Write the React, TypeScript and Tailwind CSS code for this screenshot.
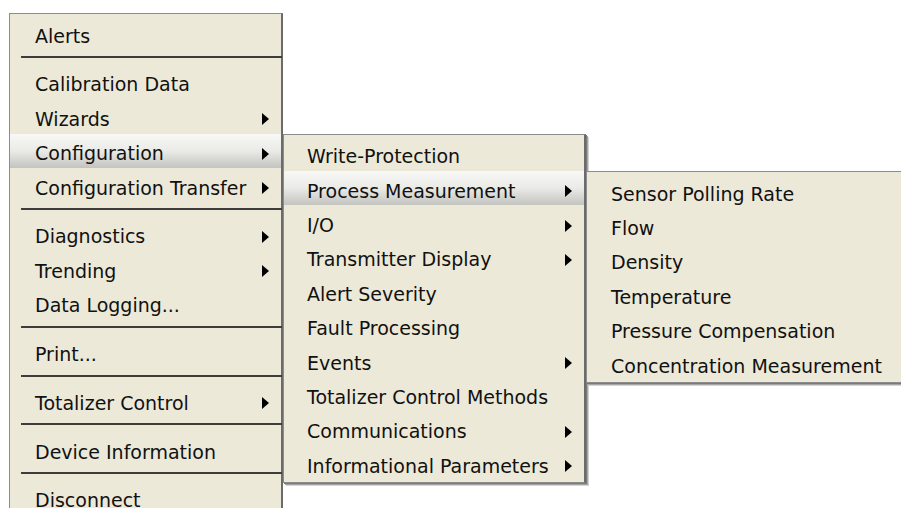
type Entry = { label: string; sub?: boolean; open?: boolean } | 'sep'

const MAIN: Entry[] = [
  { label: 'Alerts' },
  'sep',
  { label: 'Calibration Data' },
  { label: 'Wizards', sub: true },
  { label: 'Configuration', sub: true, open: true },
  { label: 'Configuration Transfer', sub: true },
  'sep',
  { label: 'Diagnostics', sub: true },
  { label: 'Trending', sub: true },
  { label: 'Data Logging...' },
  'sep',
  { label: 'Print...' },
  'sep',
  { label: 'Totalizer Control', sub: true },
  'sep',
  { label: 'Device Information' },
  'sep',
  { label: 'Disconnect' },
]

const CONFIG: Entry[] = [
  { label: 'Write-Protection' },
  { label: 'Process Measurement', sub: true, open: true },
  { label: 'I/O', sub: true },
  { label: 'Transmitter Display', sub: true },
  { label: 'Alert Severity' },
  { label: 'Fault Processing' },
  { label: 'Events', sub: true },
  { label: 'Totalizer Control Methods' },
  { label: 'Communications', sub: true },
  { label: 'Informational Parameters', sub: true },
]

const PROCESS: Entry[] = [
  { label: 'Sensor Polling Rate' },
  { label: 'Flow' },
  { label: 'Density' },
  { label: 'Temperature' },
  { label: 'Pressure Compensation' },
  { label: 'Concentration Measurement' },
]

function Arrow() {
  return (
    <svg width="7" height="12" viewBox="0 0 7 12" className="ml-auto shrink-0">
      <path d="M0 0L7 6L0 12Z" fill="#000" />
    </svg>
  )
}

function Menu({ items, pad, child }: { items: Entry[]; pad: string; child?: React.ReactNode }) {
  return (
    <div className="flex flex-col py-[2px]">
      {items.map((it, i) =>
        it === 'sep' ? (
          <div key={i} className="h-[14.4px] pt-[6px] pl-[11px] -mr-px">
            <div className="h-[2px] bg-[#3d3d3d]" />
          </div>
        ) : (
          <div
            key={i}
            className={`relative flex h-[34.4px] items-center pt-[6px] pr-[12px] ${pad} text-[19px] leading-none whitespace-nowrap text-[#111] ${
              it.open ? 'bg-linear-to-b from-[#f8f8f6] via-[#eaeae7] to-[#c3c3bf]' : ''
            }`}
          >
            <span>{it.label}</span>
            {it.sub && <Arrow />}
            {it.open && child}
          </div>
        )
      )}
    </div>
  )
}

export default function App() {
  const panel =
    'border border-[#8c8c8c] border-r-2 border-r-[#6b6b6b] bg-[#ece9d8]'
  const shadow = 'shadow-[1px_1px_0_#7a7a7a,2px_2px_0_#a5a5a5,3px_3px_0_#d4d4d4]'

  const process = (
    <div className={`absolute left-[calc(100%+2px)] top-0 z-20 w-[330px] ${panel} ${shadow}`}>
      <Menu items={PROCESS} pad="pl-6" />
    </div>
  )

  const config = (
    <div className={`absolute left-[calc(100%+2px)] top-0 z-10 w-[303px] ${panel} ${shadow}`}>
      <Menu items={CONFIG} pad="pl-[23px]" child={process} />
    </div>
  )

  return (
    <div className="relative h-[508px] w-[901px] overflow-hidden bg-white pl-[9px] pt-[13px] font-['DejaVu_Sans',sans-serif]">
      <div className={`w-[274px] ${panel}`}>
        <Menu items={MAIN} pad="pl-[25px]" child={config} />
      </div>
    </div>
  )
}
